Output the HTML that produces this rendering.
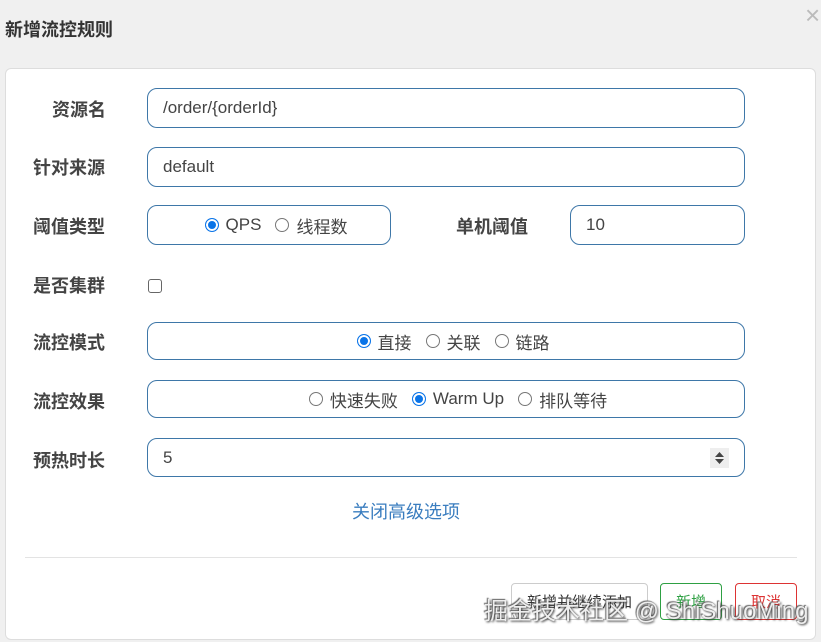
<!DOCTYPE html>
<html><head><meta charset="utf-8"><style>
*{box-sizing:border-box;margin:0;padding:0}
body{width:821px;height:642px;background:#f0f0f0;position:relative;overflow:hidden;font-family:"Liberation Sans","Noto Sans CJK SC",sans-serif;color:#333}
.abs{position:absolute}
.title{left:5px;top:16px;font-size:18px;font-weight:bold;color:#333}
.close{left:805px;top:0px;font-size:26px;color:#bbb}
.panel{left:5px;top:68px;width:811px;height:572px;background:#fff;border:1px solid #ddd;border-radius:6px}
.lab{left:33px;font-size:18px;font-weight:bold;color:#444;line-height:20px}
.box{border:1px solid #3e77a8;border-radius:10px;font-size:17px;color:#444;display:flex;align-items:center}
.txt{padding-left:15px}
.cen{justify-content:center}
.r{display:inline-block;width:14px;height:14px;border:1.5px solid #777;border-radius:50%;margin:0 7px 0 14px;vertical-align:-1px;flex:none}
.r.on{border:1.5px solid #0a74e8;background:#0a74e8;box-shadow:inset 0 0 0 2px #fff}
.btn{top:583px;height:37px;border-radius:4px;font-size:15px;display:flex;align-items:center;justify-content:center;background:#fff}
.wm{left:484px;top:591px;font-size:24px;color:#eee;text-shadow:1px 1px 2px #333,-1px -1px 1px #666;white-space:nowrap}
</style></head><body>
<div class="abs title">新增流控规则</div>
<div class="abs close">×</div>
<div class="abs panel"></div>

<div class="abs lab" style="top:100px;left:52px">资源名</div>
<div class="abs box txt" style="left:147px;top:88px;width:598px;height:40px">/order/{orderId}</div>

<div class="abs lab" style="top:158px">针对来源</div>
<div class="abs box txt" style="left:147px;top:147px;width:598px;height:40px">default</div>

<div class="abs lab" style="top:217px">阈值类型</div>
<div class="abs box cen" style="left:147px;top:205px;width:244px;height:40px"><span class="r on"></span>QPS<span class="r"></span>线程数</div>
<div class="abs lab" style="top:217px;left:456px">单机阈值</div>
<div class="abs box txt" style="left:570px;top:205px;width:175px;height:40px">10</div>

<div class="abs lab" style="top:276px">是否集群</div>
<div class="abs" style="left:148px;top:279px;width:14px;height:14px;border:1.5px solid #666;border-radius:3px"></div>

<div class="abs lab" style="top:333px">流控模式</div>
<div class="abs box cen" style="left:147px;top:322px;width:598px;height:38px"><span class="r on"></span>直接<span class="r"></span>关联<span class="r"></span>链路</div>

<div class="abs lab" style="top:392px">流控效果</div>
<div class="abs box cen" style="left:147px;top:380px;width:598px;height:38px;padding-left:10px"><span class="r"></span>快速失败<span class="r on"></span>Warm Up<span class="r"></span>排队等待</div>

<div class="abs lab" style="top:451px">预热时长</div>
<div class="abs box txt" style="left:147px;top:438px;width:598px;height:39px">5</div>
<div class="abs" style="left:710px;top:448px;width:19px;height:20px;background:#eee"><svg width="19" height="20"><path d="M5 9 L9.5 4 L14 9Z M5 11 L9.5 16 L14 11Z" fill="#444"/></svg></div>

<div class="abs" style="left:352px;top:498px;font-size:18px;color:#3a7dbf">关闭高级选项</div>
<div class="abs" style="left:25px;top:557px;width:772px;height:1px;background:#e3e3e3"></div>

<div class="abs btn" style="left:511px;width:137px;border:1px solid #ccc;color:#333">新增并继续添加</div>
<div class="abs btn" style="left:660px;width:62px;border:1px solid #2ea043;color:#2ea043">新增</div>
<div class="abs btn" style="left:735px;width:62px;border:1px solid #d33;color:#d33">取消</div>
<div class="abs wm">掘金技术社区 @ ShiShuoMing</div>
</body></html>
